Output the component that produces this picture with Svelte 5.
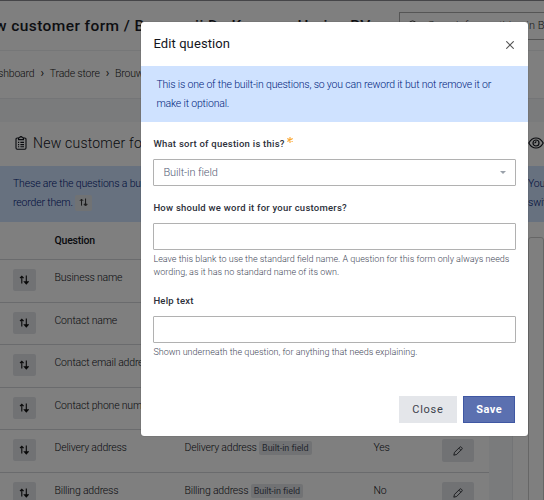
<script>
  const rows = [
    { name: 'Business name', required: 'Yes' },
    { name: 'Contact name', required: 'Yes' },
    { name: 'Contact email address', required: 'Yes' },
    { name: 'Contact phone number', required: 'No' },
    { name: 'Delivery address', required: 'Yes' },
    { name: 'Billing address', required: 'No' }
  ];
</script>

{#snippet sortIcon()}
  <svg class="sort" viewBox="0 0 10 10" fill="none" stroke="currentColor" stroke-width="1.1">
    <path d="M2.8 8.5V1.2M1 3.2L2.8 1.2L4.6 3.2M7.3 .6V8M5.5 6.9L7.3 8.9L9.1 6.9Z" />
  </svg>
{/snippet}

<div class="page">
  <header class="top">
    <h1>New customer form / Brouwerij De Kromme Haring BV</h1>
    <div class="search">
      <svg viewBox="0 0 12 12" fill="none" stroke="currentColor"><circle cx="5" cy="5" r="4" /><path d="M8 8l3.4 3.4" /></svg>
      <span>Search for anything in B</span>
    </div>
  </header>
  <nav>
    <span>Dashboard</span><i>›</i><span>Trade store</span><i>›</i><span>Brouwerij</span>
  </nav>
  <main>
    <section class="left">
      <div class="title">
        <svg class="clip" viewBox="0 0 12 14" fill="none" stroke="currentColor" stroke-width="1.1">
          <path d="M3.5 2H2.2Q1 2 1 3.2V12Q1 13.2 2.2 13.2H9.8Q11 13.2 11 12V3.2Q11 2 9.8 2H8.5M3.5 3.6V2L4.7 1.6Q5 .6 6 .6T7.3 1.6L8.5 2V3.6ZM3 6.4H4.2M5.4 6.4H9M3 8.6H4.2M5.4 8.6H9M3 10.8H4.2M5.4 10.8H9" />
        </svg>
        <h2>New customer form</h2>
      </div>
      <div class="info">These are the questions a business answers. Drag to<br />reorder them. <b class="chip">{@render sortIcon()}</b></div>
      <div class="row head"><span></span><span>Question</span></div>
      {#each rows as row}
        <div class="row">
          <span class="handle">{@render sortIcon()}</span>
          <span class="txt">{row.name}</span>
          <span class="txt">{row.name} <em>Built-in field</em></span>
          <span class="txt">{row.required}</span>
          <span class="edit">
            <svg viewBox="0 0 10 10" fill="none" stroke="currentColor" stroke-width=".8"><path d="M.8 9.2L1.5 6.4L6.8 1.1Q7.5 .4 8.2 1.1L8.9 1.8Q9.6 2.5 8.9 3.2L3.6 8.5ZM5.8 2.1L7.9 4.2" /></svg>
          </span>
        </div>
      {/each}
    </section>
    <section class="right">
      <div class="title">
        <svg class="eye" viewBox="0 0 16 12" fill="none" stroke="currentColor" stroke-width="1.2"><path d="M.8 6Q3.5 1 8 1T15.2 6Q12.5 11 8 11T.8 6Z" /><circle cx="8" cy="6" r="3" /><path d="M8 4.3Q8 6 6.4 6" /></svg>
      </div>
      <div class="info">You can<br />switch</div>
      <div class="preview"></div>
    </section>
  </main>
  <div class="shade"></div>
  <div class="modal" role="dialog" aria-label="Edit question">
    <div class="mhead">
      <h3>Edit question</h3>
      <svg viewBox="0 0 8 8" stroke="#555" stroke-width="1.1"><path d="M.3 .3L7.7 7.7M7.7 .3L.3 7.7" /></svg>
    </div>
    <div class="banner">This is one of the built-in questions, so you can reword it but not remove it or<br />make it optional.</div>
    <div class="body">
      <div class="label">What sort of question is this?<svg class="star" viewBox="0 0 6 6" stroke="#fba62f" stroke-width="1.1"><path d="M3 0V6M.3 1.5L5.7 4.5M5.7 1.5L.3 4.5" /></svg></div>
      <div class="field"><span>Built-in field</span><b class="caret"></b></div>
      <div class="label second">How should we word it for your customers?</div>
      <div class="field"></div>
      <p>Leave this blank to use the standard field name. A question for this form only always needs<br />wording, as it has no standard name of its own.</p>
      <div class="label third">Help text</div>
      <div class="field"></div>
      <p>Shown underneath the question, for anything that needs explaining.</p>
    </div>
    <footer><button class="close">Close</button><button class="save">Save</button></footer>
  </div>
</div>

<style>
  .page { position: relative; width: 544px; height: 500px; overflow: hidden; background: #fff; font-family: Roboto, sans-serif; font-weight: 300; color: #13151c; box-sizing: border-box; border-top: 1px solid #454548; }
  .page *, .page *::before { box-sizing: border-box; }
  h1, h2, h3, p { margin: 0; }
  svg { display: block; flex: none; }
  .top { height: 50px; display: flex; align-items: center; border-bottom: 1px solid #eceef0; white-space: nowrap; }
  h1 { width: 400px; flex: none; margin-left: -25px; font-size: 15.5px; font-weight: 500; letter-spacing: .41px; color: #1b1d27; }
  .search { margin-left: 24px; width: 170px; flex: none; height: 28px; border: 1px solid #aaa; display: flex; align-items: center; padding-left: 8px; gap: 9px; font-size: 11px; letter-spacing: .1px; color: #333; }
  .search svg { width: 11px; }
  nav { height: 47px; display: flex; align-items: center; margin-left: -14px; gap: 6px; font-size: 10.5px; letter-spacing: -.2px; color: #222; padding-bottom: 3px; white-space: nowrap; }
  nav i { font-style: normal; font-size: 12px; font-weight: 400; }
  main { display: flex; gap: 23px; height: 402px; padding-top: 23px; background: #f4f6f9; border-top: 1px solid #e8eaee; }
  section { background: #fff; height: 379px; }
  .left { width: 489px; flex: none; }
  .right { width: 40px; border-left: 1px solid #e6e8ec; padding-left: 15px; overflow: hidden; }
  .title { height: 44px; display: flex; align-items: center; padding: 0 0 3px 15px; gap: 6px; }
  .clip { width: 12px; height: 14px; }
  h2 { font-size: 14px; font-weight: 300; letter-spacing: .22px; }
  .info { background: #cfe2ff; color: #002078; height: 56px; padding: 9px 13px; font-size: 10.5px; letter-spacing: -.16px; line-height: 18.5px; white-space: nowrap; }
  .right .title { padding-left: 0; }
  .right .info { padding-left: 2px; margin-left: -2px; }
  .eye { width: 16px; }
  .preview { height: 300px; margin-top: 15px; border: 1px solid #ccc; border-radius: 3px; }
  .chip { display: inline-flex; width: 17px; height: 16px; border-radius: 2px; background: #e1e4e8; color: #333; align-items: center; justify-content: center; vertical-align: middle; }
  .sort { width: 10px; height: 10px; }
  .chip .sort { width: 9px; height: 9px; }
  .row { display: grid; grid-template-columns: 41.5px 130px 189px 68px 32px; height: 42.5px; padding: 9px 0 0 13px; border-top: 1px solid #d5d7da; font-size: 10.5px; letter-spacing: -.2px; white-space: nowrap; }
  .row.head { height: 37px; border: 0; padding-top: 12px; font-weight: 500; }
  .handle { width: 22.5px; height: 22px; border-radius: 2px; background: #e3e5e9; display: flex; align-items: center; justify-content: center; color: #111; }
  .txt { line-height: 18px; min-width: 0; }
  .txt em { font-style: normal; font-weight: 400; font-size: 9px; letter-spacing: -.05px; background: #e2e4e8; color: #4a5060; padding: 2px 3px; border-radius: 2px; }
  .edit { width: 32px; height: 23px; background: #e3e5e9; border-radius: 2px; display: flex; align-items: center; justify-content: center; }
  .edit svg { width: 10px; height: 10px; }
  .shade { position: absolute; inset: 0; background: rgba(0, 0, 0, .5); }
  .modal { position: absolute; left: 141.4px; top: 21px; width: 386.5px; height: 414px; border-radius: 3px; background: #fff; box-shadow: 0 0 1px #333; overflow: hidden; }
  .mhead { height: 44px; padding: 0 14px 0 12px; display: flex; align-items: center; justify-content: space-between; }
  .mhead svg { width: 8px; margin-top: 2px; }
  h3 { font-size: 13px; font-weight: 400; letter-spacing: .1px; padding-bottom: 2px; }
  .banner { height: 56px; background: #cfe2ff; padding: 10px 15px; color: #00237c; font-size: 10.5px; letter-spacing: -.18px; line-height: 18.5px; white-space: nowrap; }
  .body { padding: 15px 12px 0; }
  .label { display: flex; height: 13px; line-height: 13px; font-size: 9.5px; font-weight: 500; letter-spacing: .24px; margin-bottom: 9px; white-space: nowrap; color: #2d303a; }
  .star { width: 6px; height: 6px; margin-left: 2px; }
  .second { margin-top: 15px; }
  .third { margin-top: 16px; }
  .field { height: 27px; border: 1px solid #b1b1b1; border-radius: 1px; display: flex; align-items: center; justify-content: space-between; padding: 0 9px; font-size: 11px; letter-spacing: -.12px; color: #566077; }
  .caret { border: 3px solid transparent; border-top-color: #9aa1aa; border-bottom: 0; }
  p { margin-top: 3px; font-size: 9px; line-height: 12.5px; color: #3f4959; white-space: nowrap; }
  footer { position: absolute; right: 12.5px; bottom: 13px; display: flex; gap: 6px; }
  button { height: 27.5px; padding: 0; border: 1px solid #e4e6ea; background: #e4e6ea; width: 58px; font: 400 11px Roboto, sans-serif; letter-spacing: .7px; color: #3c424c; }
  .save { width: 52.5px; background: #5b70b0; border-color: #3f57a3; color: #fff; font-weight: 700; letter-spacing: .5px; }
</style>
